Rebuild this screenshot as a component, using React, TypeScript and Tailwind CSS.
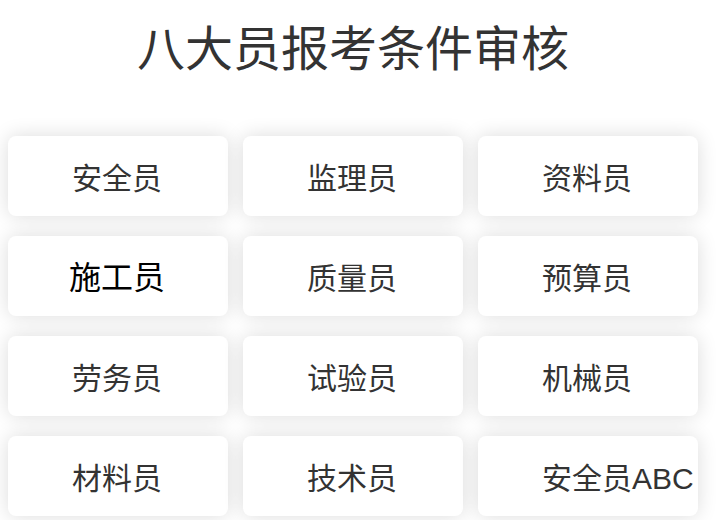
import React from 'react';

const items = [
  '安全员', '监理员', '资料员',
  '施工员', '质量员', '预算员',
  '劳务员', '试验员', '机械员',
  '材料员', '技术员', '安全员ABC',
];

export default function App() {
  return (
    <div
      className="w-[706px] bg-white"
      style={{ fontFamily: '"Liberation Sans", "Noto Sans CJK SC", sans-serif' }}
    >
      <div className="h-[100px] flex items-center justify-center">
        <h1 className="text-[48px] leading-none text-[#333] font-normal">八大员报考条件审核</h1>
      </div>
      <div className="grid grid-cols-3 gap-x-[15px] gap-y-[20px] px-2 pt-[36px] pb-2">
        {items.map((name, i) => (
          <div
            key={i}
            className="h-[80px] rounded-lg bg-white shadow-[0_0_20px_rgba(0,0,0,0.14)] flex items-center pl-[64px] pt-[4px] whitespace-nowrap"
          >
            {name === '施工员' ? (
              <span className="text-[32px] text-black -ml-[3px]">{name}</span>
            ) : (
              <span className="text-[30px] text-[#333]">{name}</span>
            )}
          </div>
        ))}
      </div>
    </div>
  );
}
